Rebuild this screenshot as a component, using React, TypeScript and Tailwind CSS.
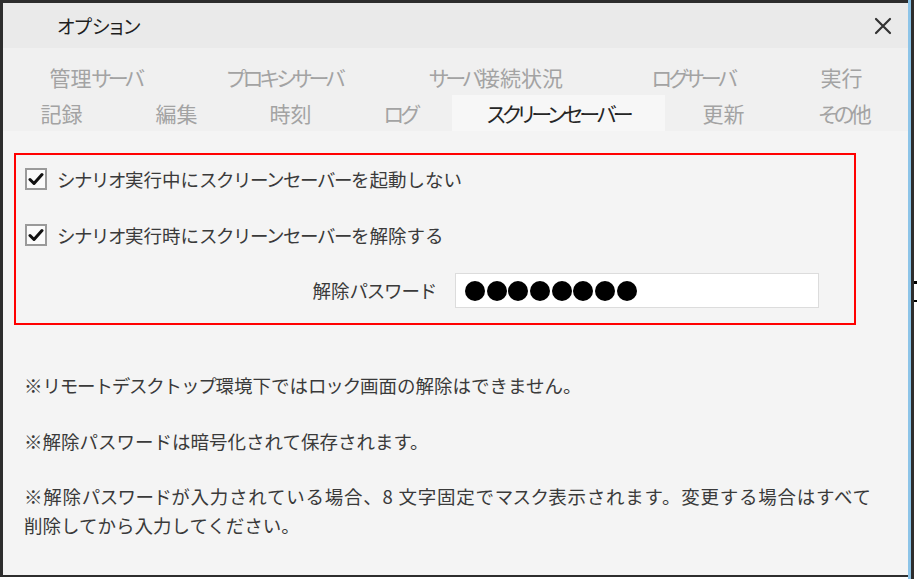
import React from "react";

const font = { fontFamily: '"Noto Sans CJK JP", "Noto Sans", sans-serif' };

function Check() {
  return (
    <div className="w-[22px] h-[22px] border-[2px] border-[#9a9a9a] bg-[#fbfbfb] flex items-center justify-center shrink-0">
      <svg width="16" height="14" viewBox="0 0 16 14">
        <path d="M2 7.5 L6 11.5 L14 2.5" fill="none" stroke="#111" strokeWidth="3" strokeLinecap="round" strokeLinejoin="round" />
      </svg>
    </div>
  );
}

// Wraps runs of kana in a span with the given (fully written) tracking class
function Narrow({ t, cls, hira = false }: { t: string; cls: string; hira?: boolean }) {
  const re = hira ? /([ぁ-ゖァ-ヶー]+)/ : /([ァ-ヶー]+)/;
  const test = hira ? /^[ぁ-ゖァ-ヶー]+$/ : /^[ァ-ヶー]+$/;
  const parts = t.split(re).filter((p) => p.length > 0);
  return (
    <>
      {parts.map((p, i) =>
        test.test(p) ? (
          <span key={i} className={cls}>
            {p}
          </span>
        ) : (
          <span key={i}>{p}</span>
        )
      )}
    </>
  );
}

const row1 = [
  { t: "管理サーバ", w: "w-[185px]" },
  { t: "プロキシサーバ", w: "w-[193px]" },
  { t: "サーバ接続状況", w: "w-[230px]" },
  { t: "ログサーバ", w: "w-[164px]" },
  { t: "実行", w: "w-[133px]" },
];
const row2 = [
  { t: "記録", w: "w-[117px]" },
  { t: "編集", w: "w-[113px]" },
  { t: "時刻", w: "w-[115px]" },
  { t: "ログ", w: "w-[104px]" },
  { t: "スクリーンセーバー", w: "w-[213px]", sel: true },
  { t: "更新", w: "w-[117px]" },
  { t: "その他", w: "w-[126px]" },
];

export default function App() {
  return (
    <div className="w-[918px] h-[579px] bg-white flex overflow-hidden" style={font}>
      <div className="w-[908px] h-[577px] border-l-[3px] border-t-[3px] border-b-[2px] border-[#2d2d2d] flex flex-col bg-[#f4f4f4]">
        {/* title bar */}
        <div className="h-[45px] bg-[#eaeaea] flex items-center justify-between pl-[54px] pr-[16px] shrink-0">
          <span className="text-[19px] text-[#1e1e1e] leading-none [font-feature-settings:'palt']">オプション</span>
          <svg width="18" height="18" viewBox="0 0 18 18">
            <path d="M2 2 L16 16 M16 2 L2 16" stroke="#333" strokeWidth="2.2" strokeLinecap="round" />
          </svg>
        </div>
        {/* tabs */}
        <div className="bg-[#f0f0f0] pt-[11px] shrink-0 [font-feature-settings:'palt']">
          <div className="flex h-[36px]">
            {row1.map((r) => (
              <div key={r.t} className={`${r.w} flex items-center justify-center text-[21px] text-[#a3a3a3] leading-none`}>
                <Narrow t={r.t} cls="tracking-[-3.4px]" hira />
              </div>
            ))}
          </div>
          <div className="flex h-[36px]">
            {row2.map((r) => (
              <div
                key={r.t}
                className={`${r.w} flex items-center justify-center text-[21px] leading-none ${r.sel ? "bg-[#f7f7f7] text-[#262626]" : "text-[#a3a3a3]"}`}
              >
                <Narrow t={r.t} cls="tracking-[-3.4px]" hira />
              </div>
            ))}
          </div>
        </div>
        {/* content */}
        <div className="flex-1 flex flex-col pl-[11px] pt-[22px]">
          <div className="w-[842px] h-[172px] border-[2px] border-[#ff0000] flex flex-col pl-[9px] pt-[13px]">
            <div className="flex items-center h-[22px] gap-[10px]">
              <Check />
              <span className="text-[18.5px] text-[#3a3a3a] leading-none">
                <Narrow t="シナリオ実行中にスクリーンセーバーを起動しない" cls="tracking-[-1.5px]" />
              </span>
            </div>
            <div className="flex items-center h-[22px] gap-[10px] mt-[34px]">
              <Check />
              <span className="text-[18.5px] text-[#3a3a3a] leading-none">
                <Narrow t="シナリオ実行時にスクリーンセーバーを解除する" cls="tracking-[-1.5px]" />
              </span>
            </div>
            <div className="flex items-center mt-[27px]">
              <div className="w-[412px] text-right text-[18.5px] text-[#3a3a3a] leading-none pr-[1px]">
                <Narrow t="解除パスワード" cls="tracking-[-1.2px]" />
              </div>
              <div className="ml-[18px] w-[364px] h-[35px] bg-white border border-[#dcdcdc] flex items-center pl-[9px] gap-[1.7px]">
                {Array.from({ length: 8 }).map((_, i) => (
                  <span key={i} className="w-[20px] h-[20px] rounded-full bg-black inline-block" />
                ))}
              </div>
            </div>
          </div>
          <div className="pl-[10px] text-[18.5px] text-[#3a3a3a] leading-[29px] mt-[46px]">
            <p>
              <Narrow t="※リモートデスクトップ環境下ではロック画面の解除はできません。" cls="tracking-[-1.2px]" />
            </p>
            <p className="mt-[27px]">※解除パスワードは暗号化されて保存されます。</p>
            <div className="mt-[26px]">
              <p className="tracking-[0.75px] whitespace-nowrap">
                <Narrow t="※解除パスワードが入力されている場合、8 文字固定でマスク表示されます。変更する場合はすべて" cls="tracking-[-0.6px]" />
              </p>
              <p>削除してから入力してください。</p>
            </div>
          </div>
        </div>
      </div>
      <div className="w-[3px] h-[579px] bg-[#8cc4e8]" />
      <div className="w-[3px] h-[579px] bg-[#2d2d2d]" />
      <div className="flex-1 h-[579px] bg-white relative">
        <span className="absolute left-0 top-[281px] w-[3px] h-[3px] bg-black" />
        <span className="absolute left-0 top-[300px] w-[3px] h-[2px] bg-black" />
      </div>
    </div>
  );
}
